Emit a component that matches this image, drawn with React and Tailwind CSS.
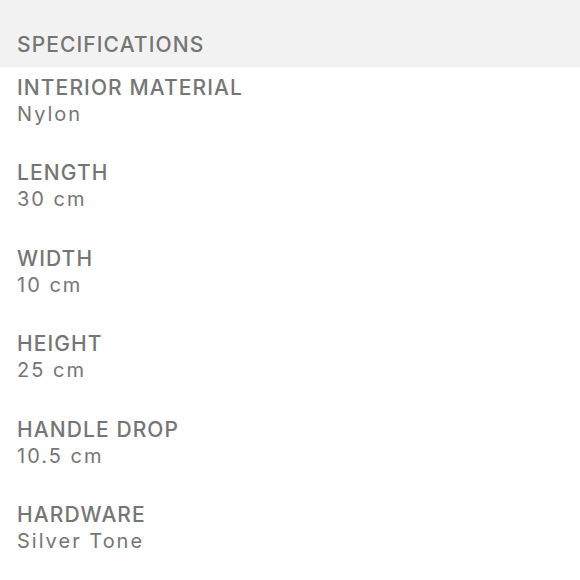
const specs = [
  { label: "INTERIOR MATERIAL", value: "Nylon" },
  { label: "LENGTH", value: "30 cm" },
  { label: "WIDTH", value: "10 cm" },
  { label: "HEIGHT", value: "25 cm" },
  { label: "HANDLE DROP", value: "10.5 cm" },
  { label: "HARDWARE", value: "Silver Tone" },
];

export default function App() {
  return (
    <div className="w-[580px] h-[580px] bg-white overflow-hidden font-['Inter',sans-serif] text-[#757575]">
      <div className="bg-[#f2f2f2] h-[67px] px-[17px] pt-[32px]">
        <h2 className="text-[21px] leading-[26px] font-medium tracking-[1.1px]">SPECIFICATIONS</h2>
      </div>
      <div className="px-[17px] pt-[8px] flex flex-col gap-[33.4px]">
        {specs.map((s) => (
          <div key={s.label} className="flex flex-col">
            <div className="text-[21px] leading-[26px] font-medium tracking-[1.1px]">{s.label}</div>
            <div className="text-[20px] leading-[26px] tracking-[2px]">{s.value}</div>
          </div>
        ))}
      </div>
    </div>
  );
}
